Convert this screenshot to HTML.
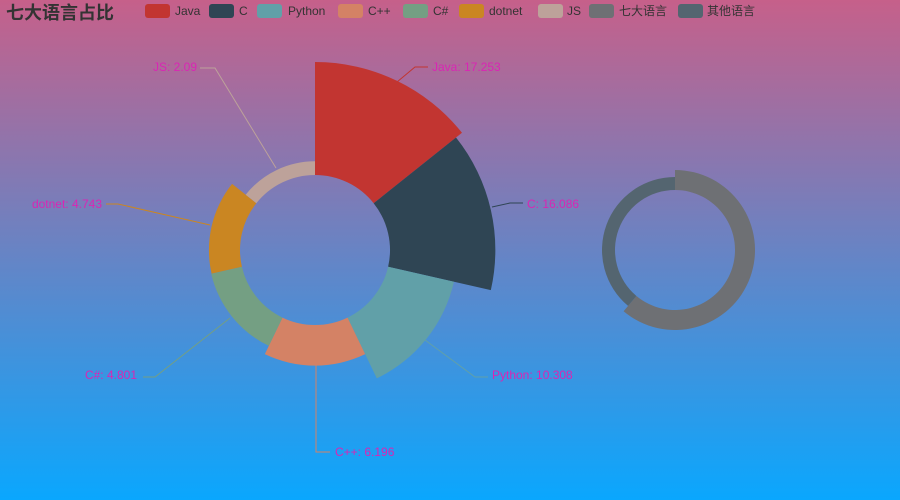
<!DOCTYPE html>
<html><head><meta charset="utf-8"><style>
html,body{margin:0;padding:0}
body{width:900px;height:500px;overflow:hidden;background:linear-gradient(#c6608a,#0aa7fe);font-family:"Liberation Sans","Noto Sans CJK SC",sans-serif}
svg{position:absolute;left:0;top:0}
</style></head><body>
<svg id="s" width="900" height="500" xmlns="http://www.w3.org/2000/svg" font-family="Liberation Sans, Noto Sans CJK SC, sans-serif">
<text x="6" y="19" font-size="18" font-weight="bold" fill="#333">七大语言占比</text>
<g font-size="12" fill="#333">
<rect x="145" y="4" width="25" height="14" rx="3" fill="#c23531"/><text x="175" y="15">Java</text>
<rect x="209" y="4" width="25" height="14" rx="3" fill="#2f4554"/><text x="239" y="15">C</text>
<rect x="257" y="4" width="25" height="14" rx="3" fill="#61a0a8"/><text x="288" y="15">Python</text>
<rect x="338" y="4" width="25" height="14" rx="3" fill="#d48265"/><text x="368" y="15">C++</text>
<rect x="403" y="4" width="25" height="14" rx="3" fill="#749f83"/><text x="433" y="15">C#</text>
<rect x="459" y="4" width="25" height="14" rx="3" fill="#ca8622"/><text x="489" y="15">dotnet</text>
<rect x="538" y="4" width="25" height="14" rx="3" fill="#bda29a"/><text x="567" y="15">JS</text>
<rect x="589" y="4" width="25" height="14" rx="3" fill="#6e7074"/><text x="619" y="15">七大语言</text>
<rect x="678" y="4" width="25" height="14" rx="3" fill="#546570"/><text x="707" y="15">其他语言</text>
</g>
<g id="pie"></g>
<g fill="none" stroke-width="1">
<polyline points="397,82 415,67 428,67" stroke="#c23531"/>
<polyline points="492,207 510,203 523,203" stroke="#2f4554"/>
<polyline points="425,340 475,377 488,377" stroke="#61a0a8"/>
<polyline points="316,365 316,452 330,452" stroke="#d48265"/>
<polyline points="230,318 155,377 143,377" stroke="#749f83"/>
<polyline points="210,225 118,204 106,204" stroke="#ca8622"/>
<polyline points="276,168 215,68 200,68" stroke="#bda29a"/>
</g>
<g font-size="12" fill="#d926b4">
<text x="432" y="71">Java: 17.253</text>
<text x="527" y="208">C: 16.086</text>
<text x="492" y="379">Python: 10.308</text>
<text x="335" y="456">C++: 6.196</text>
<text x="137" y="379" text-anchor="end">C#: 4.801</text>
<text x="102" y="208" text-anchor="end">dotnet: 4.743</text>
<text x="197" y="71" text-anchor="end">JS: 2.09</text>
</g>
</svg>
<script>
function arc(cx,cy,r0,r,a0,a1){
 function p(rr,a){var t=(a-90)*Math.PI/180;return (cx+rr*Math.cos(t)).toFixed(2)+","+(cy+rr*Math.sin(t)).toFixed(2);}
 var l=(a1-a0)>180?1:0;
 return "M"+p(r,a0)+"A"+r+","+r+" 0 "+l+" 1 "+p(r,a1)+"L"+p(r0,a1)+"A"+r0+","+r0+" 0 "+l+" 0 "+p(r0,a0)+"Z";
}
var g=document.getElementById("pie"),h="";
var v=[17.253,16.086,10.308,6.196,4.801,4.743,2.09],c=["#c23531","#2f4554","#61a0a8","#d48265","#749f83","#ca8622","#bda29a"];
for(var i=0;i<7;i++){var a=360/7;h+='<path d="'+arc(315,250,75,75+113*v[i]/17.253,i*a,(i+1)*a)+'" fill="'+c[i]+'"/>';}
h+='<path d="'+arc(675,250,60,80,0,220)+'" fill="#6e7074"/>';
h+='<path d="'+arc(675,250,60,73,220,360)+'" fill="#546570"/>';
g.innerHTML=h;
</script>
</body></html>
